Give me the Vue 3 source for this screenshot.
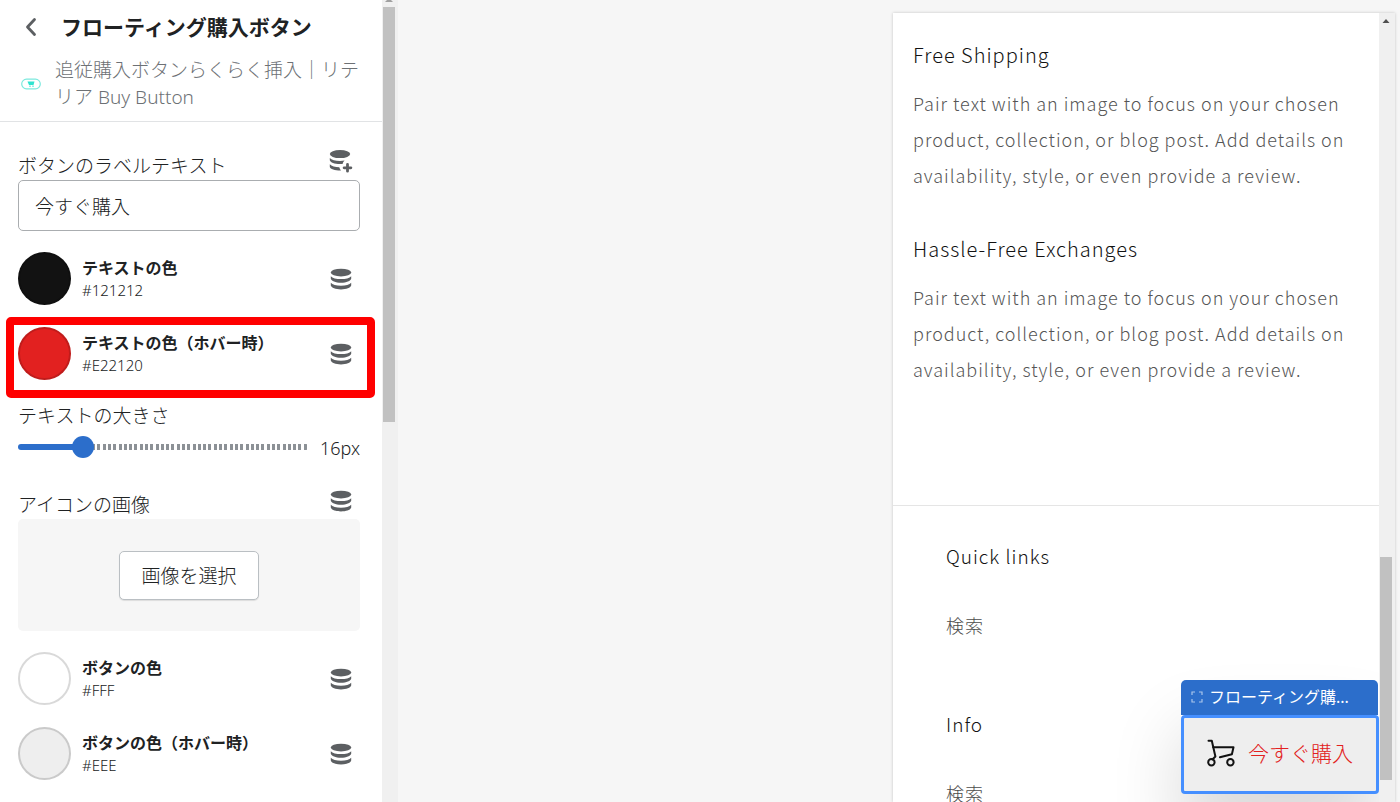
<script setup>
import { ref, computed } from 'vue'

const label = ref('今すぐ購入')
const size = ref(16)
const progress = computed(() => ((size.value - 10) / 30) * 100 + '%')

const textColors = [
  { name: 'テキストの色', hex: '#121212', fill: '#121212', marked: false },
  { name: 'テキストの色（ホバー時）', hex: '#E22120', fill: '#e22120', marked: true },
]
const buttonColors = [
  { name: 'ボタンの色', hex: '#FFF', fill: '#ffffff', marked: false },
  { name: 'ボタンの色（ホバー時）', hex: '#EEE', fill: '#eeeeee', marked: false },
]
const features = ['Free Shipping', 'Hassle-Free Exchanges']
const menus = ['Quick links', 'Info']
</script>

<template>
  <svg class="defs" aria-hidden="true">
    <symbol id="database" viewBox="0 0 24 24">
      <ellipse cx="12" cy="5.6" rx="10.2" ry="3.9" />
      <path d="M1.8 9.2c1.6 1.9 5.5 2.9 10.2 2.9s8.600-1 10.200-2.900v2.600c-.6 2.300-4.700 4-10.200 4s-9.600-1.700-10.200-4z" />
      <path d="M1.8 15.800c1.600 1.900 5.500 2.900 10.200 2.900s8.600-1 10.200-2.900v2.700c-.6 2.300-4.700 3.900-10.200 3.900s-9.600-1.600-10.200-3.900z" />
    </symbol>
  </svg>
  <div class="editor">
    <aside class="sidebar">
      <div class="panel">
        <header class="head">
          <div class="title-row">
            <button class="plain back" aria-label="戻る">
              <svg width="20" height="20" viewBox="0 0 20 20"><path d="M13.500 2.500 6.500 10l7 7.500" fill="none" stroke="#5c5f62" stroke-width="2.800" stroke-linecap="round" stroke-linejoin="round" /></svg>
            </button>
            <h1>フローティング購入ボタン</h1>
          </div>
          <div class="app-row">
            <svg class="app-icon" width="20" height="12" viewBox="0 0 20 12">
              <rect x="0.700" y="1.200" width="18.600" height="9.600" rx="4.800" fill="#fff" stroke="#7ce9de" stroke-width="1.200" />
              <path d="M6.500 3.500h7l-1 3.500H8z" fill="#2fe3d0" /><path d="M8.500 8.300h1M11.500 8.300h1" stroke="#2fe3d0" stroke-width="1.500" />
            </svg>
            <p>追従購入ボタンらくらく挿入｜リテリア Buy Button</p>
          </div>
        </header>

        <div class="settings">
          <div class="label-row">
            <label for="label-text">ボタンのラベルテキスト</label>
            <button class="plain source" aria-label="動的ソースを挿入">
              <svg width="24" height="24" viewBox="0 0 24 24" fill="#5c5f62">
                <ellipse cx="11" cy="4.100" rx="10.200" ry="4" />
                <path d="M.8 8c1.600 1.900 5.500 2.900 10.200 2.900 1.700 0 3.200-.1 4.600-.4-1 .9-1.700 2-2 3.500-.8.1-1.700.1-2.600.1C5.500 14.100 1.400 12.500.8 10.300z" />
                <path d="M.8 14.300c1.600 1.900 5.500 2.900 9.500 2.900.3 1.400.9 2.400 1.700 3.400C6 20.700 1.400 19.200.8 17z" />
                <path d="M18.500 14.400v6.800M15.100 17.800h6.800" stroke="#5c5f62" stroke-width="2.800" stroke-linecap="round" />
              </svg>
            </button>
          </div>
          <input id="label-text" v-model="label" class="text-field" type="text" />

          <div class="colors">
            <div v-for="c in textColors" :key="c.name" class="color-row">
              <button class="swatch" :style="{ backgroundColor: c.fill }" :aria-label="c.name"></button>
              <div class="color-text"><strong>{{ c.name }}</strong><span>{{ c.hex }}</span></div>
              <button class="plain source" aria-label="動的ソース"><svg width="24" height="24" fill="#5c5f62"><use href="#database" /></svg></button>
              <div v-if="c.marked" class="marker"></div>
            </div>
          </div>

          <label class="size-label" for="text-size">テキストの大きさ</label>
          <div class="slider-row">
            <input id="text-size" v-model.number="size" class="slider" type="range" min="10" max="40" :style="{ '--progress': progress }" />
            <output for="text-size">{{ size }}px</output>
          </div>

          <div class="label-row image-label">
            <span>アイコンの画像</span>
            <button class="plain source" aria-label="動的ソース"><svg width="24" height="24" fill="#5c5f62"><use href="#database" /></svg></button>
          </div>
          <div class="image-box"><button class="pick">画像を選択</button></div>

          <div class="colors">
            <div v-for="c in buttonColors" :key="c.name" class="color-row">
              <button class="swatch" :style="{ backgroundColor: c.fill }" :aria-label="c.name"></button>
              <div class="color-text"><strong>{{ c.name }}</strong><span>{{ c.hex }}</span></div>
              <button class="plain source" aria-label="動的ソース"><svg width="24" height="24" fill="#5c5f62"><use href="#database" /></svg></button>
            </div>
          </div>
        </div>
      </div>
      <div class="bar side-bar">
        <svg width="8" height="3" viewBox="0 0 8 3"><path d="M2 0h4l2 2H0z" fill="#a0a0a0" /></svg>
        <div class="thumb"></div>
      </div>
    </aside>

    <main class="stage">
      <div class="preview">
        <div class="shop">
          <section class="features">
            <article v-for="f in features" :key="f">
              <h2>{{ f }}</h2>
              <p>Pair text with an image to focus on your chosen product, collection, or blog post. Add details on availability, style, or even provide a review.</p>
            </article>
          </section>
          <footer class="footer">
            <nav v-for="m in menus" :key="m">
              <h2>{{ m }}</h2>
              <a href="#">検索</a>
            </nav>
          </footer>
          <div class="floating">
            <div class="tag">
              <svg width="12" height="12" viewBox="0 0 12 12"><path d="M1 4V1h3M8 1h3v3M11 8v3H8M4 11H1V8" fill="none" stroke="#a9c5ec" stroke-width="1.200" /></svg>
              <span>フローティング購...</span>
            </div>
            <button class="buy">
              <svg width="28" height="28" viewBox="0 0 28 28" fill="none" stroke="#121212" stroke-width="2" stroke-linecap="round" stroke-linejoin="round">
                <path d="M1.500 1.800h3.300l3.600 15.700-3 3" />
                <path d="M6.200 8.300h20.300l-1.600 6.900-12 3" />
                <circle cx="4.400" cy="23.300" r="3.200" /><circle cx="23.400" cy="23.300" r="3.200" />
              </svg>
              <span>{{ label }}</span>
            </button>
          </div>
        </div>
        <div class="bar shop-bar">
          <svg width="8" height="4" viewBox="0 0 8 4"><path d="M4 0 7.500 4H.5z" fill="#505050" /></svg>
          <div class="thumb"></div>
        </div>
      </div>
    </main>
  </div>
</template>

<style>
body { background: #f6f6f6; overflow: hidden; }
</style>

<style scoped>
* { box-sizing: border-box; }
.defs { position: absolute; width: 0; height: 0; }
h1, h2, p { margin: 0; }
button, input { font: inherit; color: inherit; }
.editor {
  display: flex;
  height: 100vh;
  overflow: hidden;
  background: #f6f6f6;
  color: #202223;
  font-family: "Noto Sans", "Noto Sans CJK JP", sans-serif;
  font-size: 19px;
  font-weight: 300;
}
.plain { display: flex; border: 0; padding: 0; background: none; cursor: pointer; }
.sidebar { display: flex; flex: 0 0 398px; overflow: hidden; background: #fff; }
.panel { flex: 1; min-width: 0; }
.head { padding: 13px 18px 10px 21px; border-bottom: 1px solid #e1e3e5; }
.title-row { display: flex; align-items: center; gap: 20px; height: 28px; }
h1 { color: #202223; font-size: 21px; line-height: 28px; font-weight: 700; white-space: nowrap; }
.app-row { display: flex; align-items: center; gap: 14px; margin-top: 16px; }
.app-icon { flex: none; }
.app-row p { color: #6d7175; font-size: 19px; line-height: 27px; }
.settings { padding: 28px 22px 0 18px; }
.label-row { display: flex; justify-content: space-between; height: 30px; line-height: 32px; }
.source { flex: none; width: 24px; height: 24px; margin-right: 7px; }
.text-field {
  display: block;
  width: 100%;
  height: 51px;
  padding: 0 16px;
  border: 1px solid #aaadb0;
  border-radius: 5px;
  background: #fff;
}
.colors { display: flex; flex-direction: column; gap: 21px; margin-top: 21px; }
.color-row { position: relative; display: flex; align-items: center; gap: 11px; height: 54px; }
.swatch { flex: none; align-self: flex-start; width: 53px; height: 53px; padding: 0; border: 2px solid rgba(0, 0, 0, 0.15); border-radius: 50%; background-clip: border-box; background-origin: border-box; }
.color-text { display: flex; flex: 1; flex-direction: column; font-size: 16px; line-height: 22px; white-space: nowrap; }
.color-text strong { color: #202223; font-weight: 700; }
.color-text span { font-size: 15px; }
.marker { position: absolute; inset: -10px -15px -17px -12px; border: 8px solid #f00; border-radius: 5px; pointer-events: none; }
.size-label { display: block; margin-top: 21px; line-height: 28px; }
.slider-row { display: flex; align-items: center; justify-content: space-between; gap: 11px; height: 34px; }
.slider-row output { font-size: 18px; line-height: 32px; padding-top: 2px; }
.slider { flex: 1; min-width: 0; height: 22px; margin: 0; appearance: none; background: none; }
.slider::-webkit-slider-runnable-track {
  height: 6px;
  border-radius: 3px;
  background:
    linear-gradient(#2c6ecb, #2c6ecb) 0 0 / var(--progress) 100% no-repeat,
    repeating-linear-gradient(90deg, #8c9196 0, #8c9196 3px, #fff 3px, #fff calc(100% / 55));
}
.slider::-webkit-slider-thumb { appearance: none; width: 22px; height: 22px; margin-top: -8px; border-radius: 50%; background: #2c6ecb; }
.image-label { margin-top: 25px; }
.image-box { display: flex; align-items: center; justify-content: center; height: 112px; border-radius: 5px; background: #f6f6f6; }
.pick { height: 49px; padding: 0 21px; border: 1px solid #babfc3; border-radius: 5px; background: #fff; box-shadow: 0 1px 1px rgba(0, 0, 0, 0.1); }
.bar { flex: none; background: #f0f0f0; }
.bar svg { display: block; margin: 0 auto; }
.thumb { background: #c1c1c1; }
.side-bar { width: 16px; padding-right: 3px; padding-left: 1px; }
.side-bar .thumb { height: 415px; margin-top: 4px; }
.stage { display: flex; flex: 1; min-width: 0; justify-content: flex-end; padding: 13px 5px 0 0; }
.preview { display: flex; width: 502px; max-width: 100%; box-shadow: 0 0 3px rgba(0, 0, 0, 0.2); }
.shop { position: relative; flex: 1; min-width: 0; overflow: hidden; background: #fff; color: #121212; font-family: "Noto Sans CJK JP", sans-serif; letter-spacing: 1px; }
.features { padding: 26px 20px 118px; }
.features article + article { margin-top: 40px; }
h2 { font-size: 20px; line-height: 32px; font-weight: 300; color: #121212; }
.features p { margin-top: 14px; font-size: 18px; line-height: 36px; color: #555; }
.footer { padding: 34px 53px 0; border-top: 1px solid #e5e5e5; }
.footer h2 { font-size: 19px; }
.footer nav + nav { margin-top: 67px; }
.footer a { display: block; margin-top: 37px; font-size: 18px; line-height: 32px; color: #4c4c4c; text-decoration: none; }
.floating { position: absolute; right: 0; bottom: 8px; width: 198px; font-family: "Noto Sans", "Noto Sans CJK JP", sans-serif; letter-spacing: normal; box-shadow: 0 50px 70px rgba(0, 0, 0, 0.15); border-radius: 5px; }
.tag { display: flex; align-items: center; gap: 6px; height: 35px; margin-right: 1px; padding: 0 10px 2px; border-radius: 5px 5px 0 0; background: #2c6ecb; color: #fff; font-size: 16px; font-weight: 400; line-height: 22px; white-space: nowrap; }
.buy { display: flex; align-items: center; justify-content: center; gap: 13px; width: 100%; height: 79px; padding: 0 0 3px; border: 3px solid #458fff; border-radius: 4px; background: #eee; color: #e22120; font-size: 21px; line-height: 28px; white-space: nowrap; }
.shop-bar { width: 16px; padding: 6px 3px 0 1px; }
.shop-bar .thumb { height: 223px; margin-top: 534px; }
</style>
